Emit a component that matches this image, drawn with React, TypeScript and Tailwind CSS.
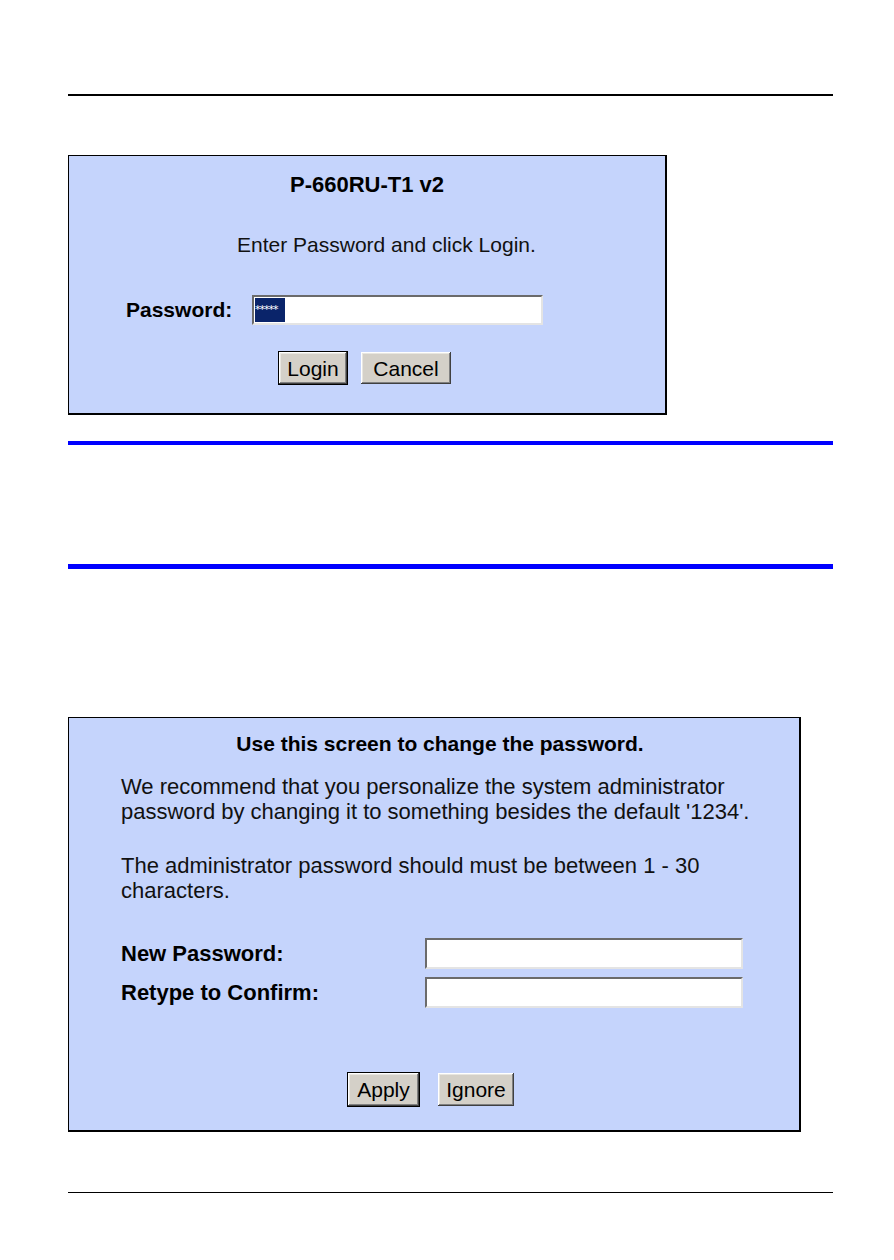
import React from 'react'

const win98Button =
  'bg-[#d4d0c8] text-black text-[21px] leading-none shadow-[inset_-1px_-1px_#404040,inset_1px_1px_#ffffff,inset_-2px_-2px_#808080,inset_2px_2px_#e8e6e0]'

const insetField =
  'bg-white border-2 border-t-[#6b6b6b] border-l-[#6b6b6b] border-r-[#e4e4e4] border-b-[#e4e4e4]'

function Btn({ label, width, primary }: { label: string; width: string; primary?: boolean }) {
  return (
    <div className={primary ? 'border border-black' : 'border border-transparent'}>
      <div className={`${win98Button} ${width} h-full flex items-center justify-center`}>{label}</div>
    </div>
  )
}

function LoginPanel() {
  return (
    <div className="w-[599px] h-[260px] bg-[#c5d4fc] border-t border-l border-r-2 border-b-2 border-black pt-[17px] flex flex-col">
      {/* title */}
      <div className="text-center font-bold text-[22px] leading-[24px] text-black">P-660RU-T1 v2</div>

      {/* hint */}
      <div className="mt-[36px] pl-[168px] text-[21px] leading-[24px] text-[#111]">Enter Password and click Login.</div>

      {/* password row */}
      <div className="mt-[38px] flex items-center pl-[57px]">
        <div className="w-[126px] font-bold text-[21px] leading-[24px] text-black">Password:</div>
        <div className={`${insetField} w-[291px] h-[30px] flex items-center px-[1px]`}>
          <span className="bg-[#0a246a] text-white text-[11px] leading-[24px] w-[30px] h-[24px] overflow-hidden tracking-[-1px] font-['DejaVu_Sans',sans-serif]">
            *****
          </span>
        </div>
      </div>

      {/* buttons */}
      <div className="mt-[26px] ml-[209px] flex h-[34px] gap-[12px]">
        <Btn label="Login" width="w-[68px]" primary />
        <Btn label="Cancel" width="w-[90px]" />
      </div>
    </div>
  )
}

function PasswordPanel() {
  return (
    <div className="w-[733px] h-[415px] bg-[#c5d4fc] border-t border-l border-r-2 border-b-2 border-black pt-[14px] flex flex-col text-black">
      <div className="pl-[12px] text-center font-bold text-[21px] leading-[24px]">Use this screen to change the password.</div>

      <div className="pl-[52px] mt-[18px] text-[22px] leading-[25px] text-[#111]">
        <p>
          We recommend that you personalize the system administrator
          <br />
          password by changing it to something besides the default '1234'.
        </p>
        <p className="mt-[29px]">
          The administrator password should must be between 1 - 30
          <br />
          characters.
        </p>
      </div>

      <div className="pl-[52px] mt-[35px] flex flex-col gap-[8px]">
        <div className="flex items-center">
          <div className="w-[304px] font-bold text-[22px] leading-[24px]">New Password:</div>
          <div className={`${insetField} w-[318px] h-[31px]`} />
        </div>
        <div className="flex items-center">
          <div className="w-[304px] font-bold text-[22px] leading-[24px]">Retype to Confirm:</div>
          <div className={`${insetField} w-[318px] h-[31px]`} />
        </div>
      </div>

      <div className="mt-[64px] ml-[278px] flex h-[35px] gap-[17px]">
        <Btn label="Apply" width="w-[71px]" primary />
        <Btn label="Ignore" width="w-[76px]" />
      </div>
    </div>
  )
}

export default function App() {
  return (
    <div className="w-[894px] h-[1260px] bg-white font-['Liberation_Sans',Arial,sans-serif]">
      <div className="ml-[68px] w-[765px] pt-[94px] flex flex-col">
        <div className="h-[2px] bg-black" />

        <div className="mt-[59px]">
          <LoginPanel />
        </div>

        <div className="mt-[26px] h-[4px] bg-[#0000ff]" />
        <div className="mt-[119px] h-[5px] bg-[#0000ff]" />

        <div className="mt-[148px]">
          <PasswordPanel />
        </div>

        <div className="mt-[60px] h-[1px] bg-black" />
      </div>
    </div>
  )
}
